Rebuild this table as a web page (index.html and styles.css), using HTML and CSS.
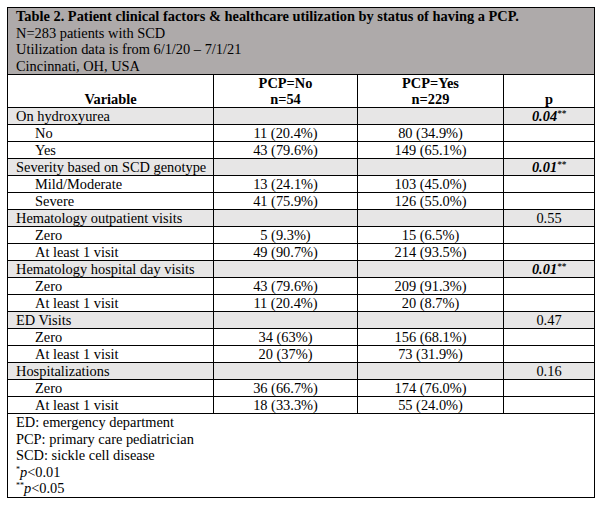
FILE: index.html
```html
<!DOCTYPE html>
<html lang="en">
<head>
<meta charset="utf-8">
<title>Table 2</title>
<link rel="stylesheet" href="styles.css">
</head>
<body>
<table class="data">
  <colgroup>
    <col class="c1"><col class="c2"><col class="c3"><col class="c4">
  </colgroup>
  <thead>
    <tr>
      <td colspan="4" class="title">
        <div class="title-main">Table 2. Patient clinical factors &amp; healthcare utilization by status of having a PCP.</div>
        <div>N=283 patients with SCD</div>
        <div>Utilization data is from 6/1/20 – 7/1/21</div>
        <div>Cincinnati, OH, USA</div>
      </td>
    </tr>
    <tr class="heads">
      <th class="bottom">Variable</th>
      <th>PCP=No<br>n=54</th>
      <th>PCP=Yes<br>n=229</th>
      <th class="bottom">p</th>
    </tr>
  </thead>
  <tbody>
    <tr class="group"><td class="lbl">On hydroxyurea</td><td></td><td></td><td class="num"><b><i>0.04</i></b><sup>**</sup></td></tr>
    <tr><td class="sub">No</td><td class="num">11 (20.4%)</td><td class="num">80 (34.9%)</td><td></td></tr>
    <tr><td class="sub">Yes</td><td class="num">43 (79.6%)</td><td class="num">149 (65.1%)</td><td></td></tr>
    <tr class="group"><td class="lbl">Severity based on SCD genotype</td><td></td><td></td><td class="num"><b><i>0.01</i></b><sup>**</sup></td></tr>
    <tr><td class="sub">Mild/Moderate</td><td class="num">13 (24.1%)</td><td class="num">103 (45.0%)</td><td></td></tr>
    <tr><td class="sub">Severe</td><td class="num">41 (75.9%)</td><td class="num">126 (55.0%)</td><td></td></tr>
    <tr class="group"><td class="lbl">Hematology outpatient visits</td><td></td><td></td><td class="num">0.55</td></tr>
    <tr><td class="sub">Zero</td><td class="num">5 (9.3%)</td><td class="num">15 (6.5%)</td><td></td></tr>
    <tr><td class="sub">At least 1 visit</td><td class="num">49 (90.7%)</td><td class="num">214 (93.5%)</td><td></td></tr>
    <tr class="group"><td class="lbl">Hematology hospital day visits</td><td></td><td></td><td class="num"><b><i>0.01</i></b><sup>**</sup></td></tr>
    <tr><td class="sub">Zero</td><td class="num">43 (79.6%)</td><td class="num">209 (91.3%)</td><td></td></tr>
    <tr><td class="sub">At least 1 visit</td><td class="num">11 (20.4%)</td><td class="num">20 (8.7%)</td><td></td></tr>
    <tr class="group"><td class="lbl">ED Visits</td><td></td><td></td><td class="num">0.47</td></tr>
    <tr><td class="sub">Zero</td><td class="num">34 (63%)</td><td class="num">156 (68.1%)</td><td></td></tr>
    <tr><td class="sub">At least 1 visit</td><td class="num">20 (37%)</td><td class="num">73 (31.9%)</td><td></td></tr>
    <tr class="group"><td class="lbl">Hospitalizations</td><td></td><td></td><td class="num">0.16</td></tr>
    <tr><td class="sub">Zero</td><td class="num">36 (66.7%)</td><td class="num">174 (76.0%)</td><td></td></tr>
    <tr><td class="sub">At least 1 visit</td><td class="num">18 (33.3%)</td><td class="num">55 (24.0%)</td><td></td></tr>
  </tbody>
  <tfoot>
    <tr>
      <td colspan="4" class="notes">
        <div>ED: emergency department</div>
        <div>PCP: primary care pediatrician</div>
        <div>SCD: sickle cell disease</div>
        <div><sup>*</sup><i>p</i>&lt;0.01</div>
        <div><sup>**</sup><i>p</i>&lt;0.05</div>
      </td>
    </tr>
  </tfoot>
</table>
</body>
</html>
```
FILE: styles.css
```css
html, body {
  margin: 0;
  padding: 0;
  background: #ffffff;
}
body {
  padding: 7px 0 0 7px;
  font-family: "Liberation Serif", "Times New Roman", serif;
  font-size: 14.4px;
  color: #000;
}
.data {
  border-collapse: collapse;
  table-layout: fixed;
  width: 587px;
}
.c1 { width: 206px; }
.c2 { width: 144px; }
.c3 { width: 146px; }
.c4 { width: 91px; }
.data td, .data th {
  border: 1px solid #000;
  padding: 0 8px;
  line-height: 16px;
  height: 16px;
  white-space: nowrap;
}
.title {
  background: #aeaaaa;
  line-height: 16.5px !important;
  padding: 0 8px;
}
.title-main {
  font-weight: bold;
}
.heads th {
  font-weight: bold;
  text-align: center;
  vertical-align: top;
}
.heads th.bottom {
  vertical-align: bottom;
}
.group td {
  background: #e7e6e6;
}
.lbl {
  text-align: left;
}
.sub {
  padding-left: 27px !important;
}
.num {
  text-align: center;
}
sup {
  font-size: 9px;
  line-height: 0;
  vertical-align: 5px;
  font-style: italic;
  font-weight: bold;
}
.notes {
  line-height: 16.6px !important;
}
.notes sup {
  font-weight: normal;
  font-style: normal;
  font-size: 8px;
}
```
